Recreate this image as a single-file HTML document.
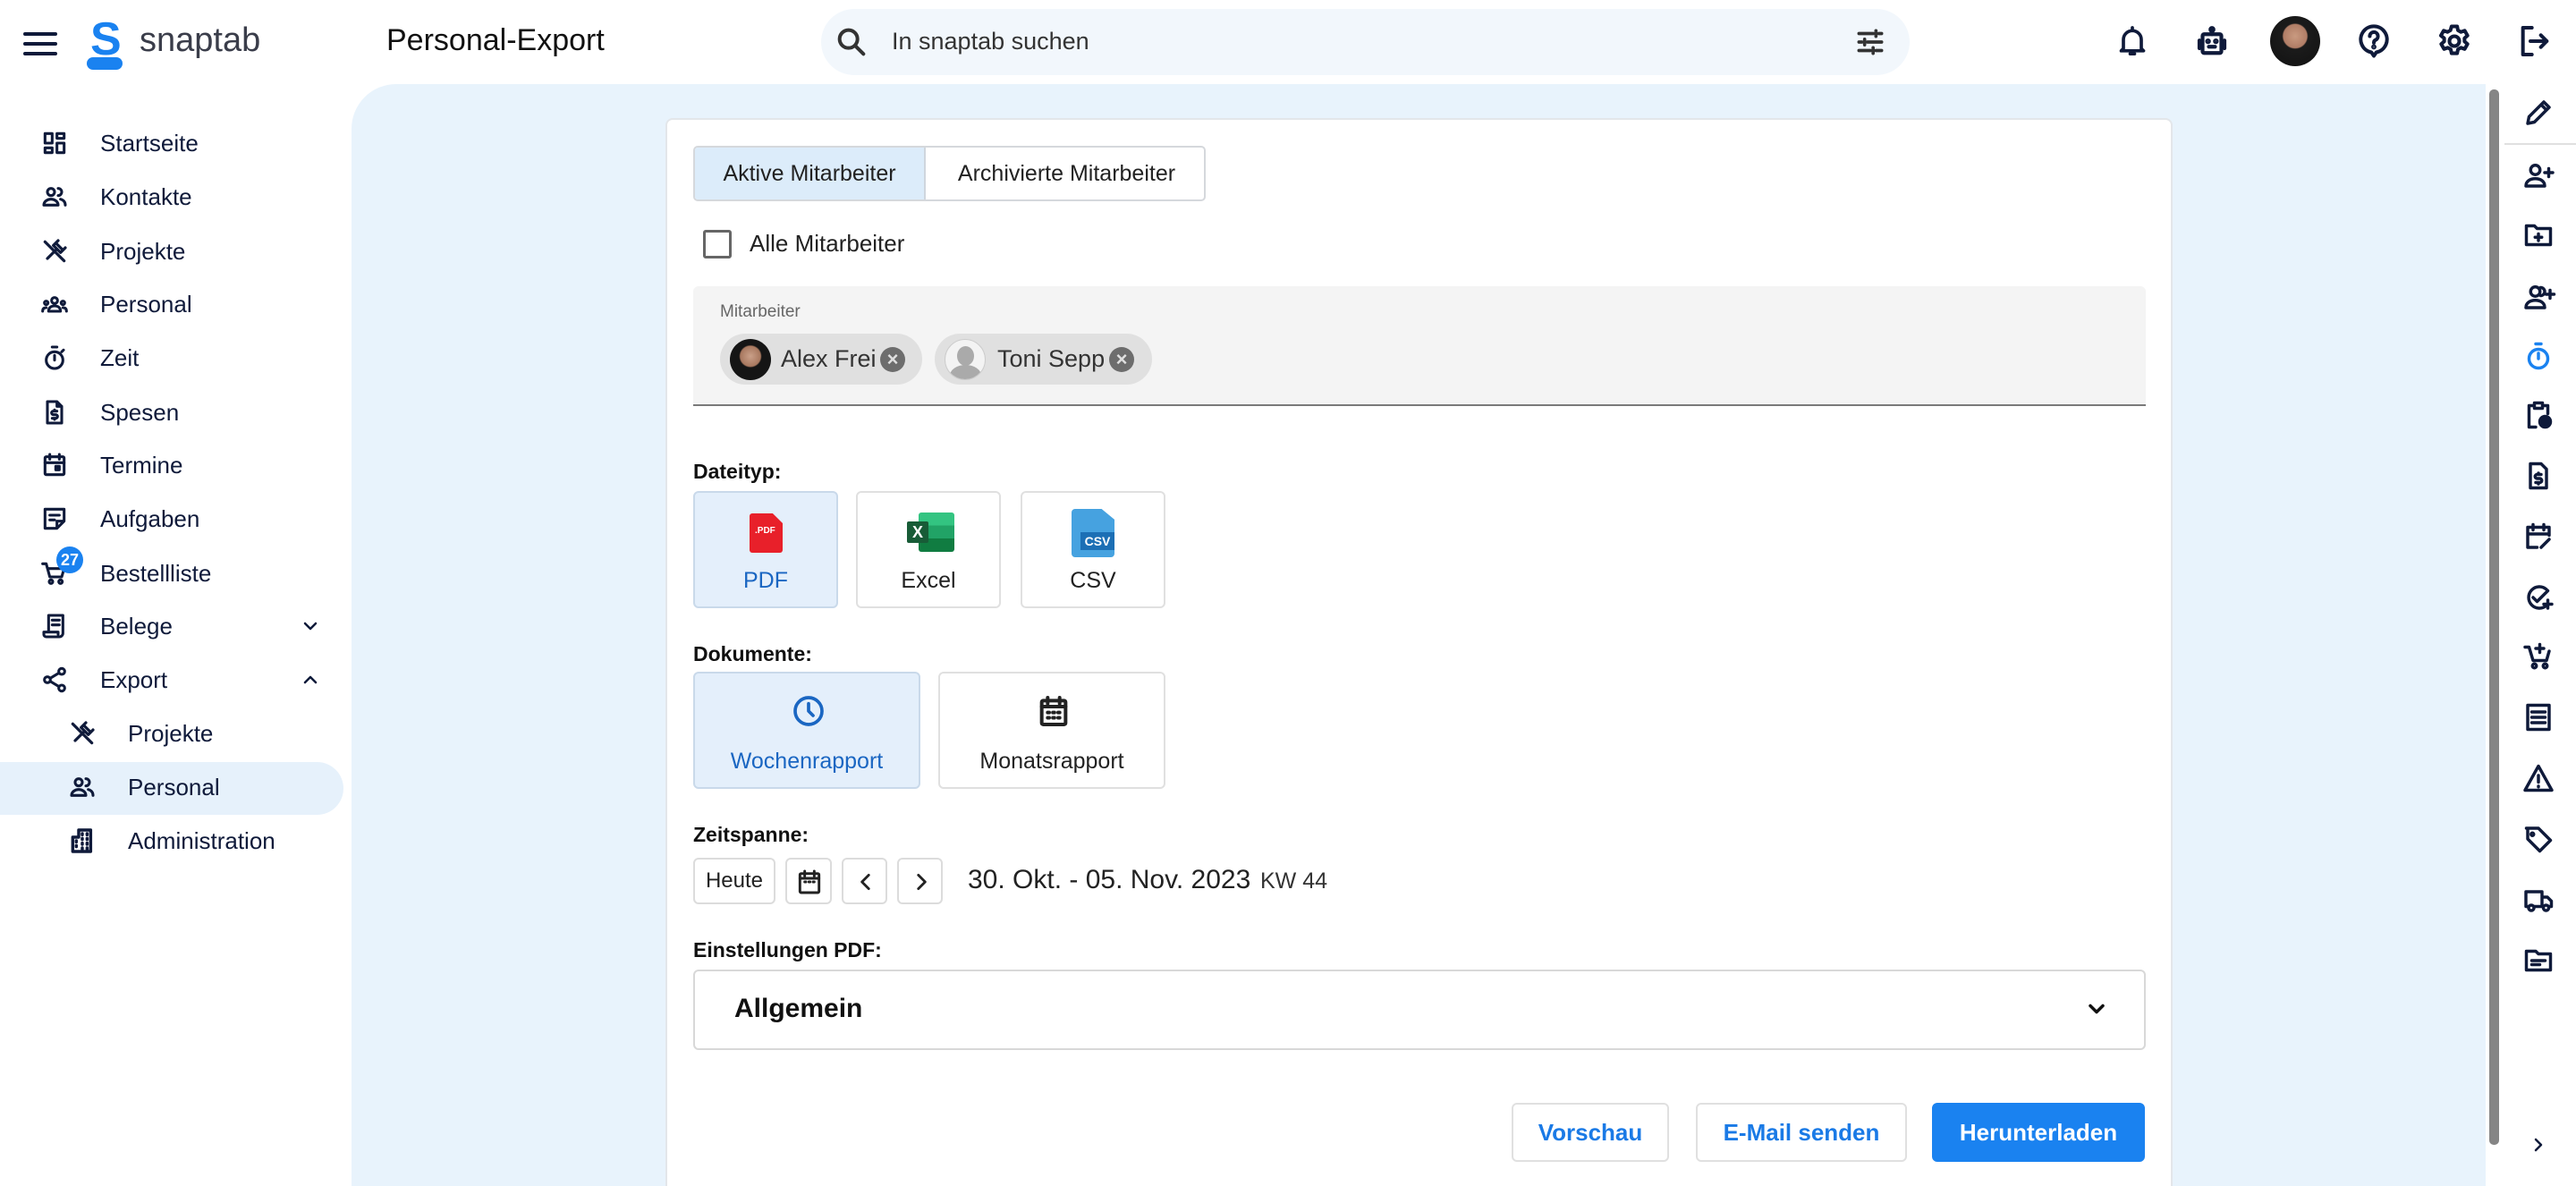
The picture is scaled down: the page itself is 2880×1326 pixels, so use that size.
<!DOCTYPE html>
<html><head><meta charset="utf-8"><style>
*{box-sizing:border-box;margin:0;padding:0}
html,body{width:2880px;height:1326px;overflow:hidden}
body{background:#fff;font-family:"Liberation Sans",sans-serif;color:#1b1b1f;position:relative}
.a{position:absolute}
svg.i{position:absolute;fill:none;stroke:#0f1a3a;stroke-width:2.3;stroke-linecap:round;stroke-linejoin:round}
.nav{position:absolute;left:112px;font-size:26px;color:#0f1a3a;line-height:30px}
.lbl{position:absolute;left:775px;font-size:23px;font-weight:bold;color:#111}
.box{position:absolute;border:2px solid #e0e0e0;border-radius:6px;background:#fff;text-align:center;font-size:25px;color:#222}
.sel{background:#e4effb;border-color:#c9d9ea;color:#1a66c2}
.btn{position:absolute;border:2px solid #dcdcdc;border-radius:6px;background:#fff}
.rb{position:absolute;top:1233px;height:66px;border:2px solid #e0e0e0;border-radius:6px;font-size:26px;font-weight:bold;color:#1a7ae6;text-align:center;line-height:62px;background:#fff}
.ri{position:absolute;left:2820px}
</style></head><body>
<!-- header -->
<svg class="i" style="left:26px;top:34px" width="38" height="30" viewBox="0 0 38 30"><path d="M2 4h34M2 15h34M2 26h34" stroke-width="4"/></svg>
<div class="a" style="left:97px;top:20px;width:40px;height:58px">
 <div class="a" style="left:4px;top:0;font-size:52px;font-weight:bold;color:#1a82f0;line-height:48px">S</div>
 <div class="a" style="left:0;top:44px;width:40px;height:14px;border-radius:7px;background:#1a82f0"></div>
</div>
<div class="a" style="left:156px;top:24px;font-size:38px;color:#3a3d4a">snaptab</div>
<div class="a" style="left:432px;top:26px;font-size:34px;font-weight:500;color:#111">Personal-Export</div>
<div class="a" style="left:918px;top:10px;width:1217px;height:74px;border-radius:37px;background:#f2f7fc"></div>
<svg class="i" style="left:932px;top:27px;stroke:#333;stroke-width:2.4" width="40" height="40" viewBox="0 0 24 24"><circle cx="10" cy="10" r="6"/><path d="M14.5 14.5 20 20"/></svg>
<div class="a" style="left:997px;top:31px;font-size:27px;color:#333">In snaptab suchen</div>
<svg class="i" style="left:2072px;top:28px;stroke:#333" width="38" height="38" viewBox="0 0 24 24"><path d="M4 6h10M18 6h2M16 4v4M4 12h2M10 12h10M8 10v4M4 18h8M16 18h4M14 16v4"/></svg>
<svg class="i" style="left:2364px;top:26px;stroke-width:2.2" width="40" height="40" viewBox="0 0 24 24"><path d="M6 17V11a6 6 0 0 1 12 0v6l1.5 1.5h-15zM10.5 20.5h3M12 3v2"/></svg>
<svg class="i" style="left:2452px;top:26px;stroke-width:2.4" width="42" height="42" viewBox="0 0 24 24"><rect x="6" y="7" width="12" height="12" rx="1"/><path d="M4 11v5M20 11v5M12 7V4"/><circle cx="12" cy="4" r="1"/><circle cx="9.5" cy="11.5" r=".6" fill="#0f1a3a"/><circle cx="14.5" cy="11.5" r=".6" fill="#0f1a3a"/><path d="M10 15h4"/></svg>
<div class="a" style="left:2538px;top:18px;width:56px;height:56px;border-radius:50%;background:radial-gradient(circle at 50% 40%,#c99a80 0,#b07d66 30%,#1b1b1b 33%,#111 100%)"></div>
<svg class="i" style="left:2632px;top:24px;stroke-width:2.2" width="44" height="44" viewBox="0 0 24 24"><path d="M12 21 10.5 18.8A8 8 0 1 1 13.5 18.8z"/><path d="M9.5 9a2.5 2.5 0 1 1 3.5 2.3c-.7.3-1 .9-1 1.7"/><circle cx="12" cy="15.5" r=".5" fill="#0f1a3a"/></svg>
<svg class="i" style="left:2722px;top:24px;stroke-width:2.2" width="44" height="44" viewBox="0 0 24 24"><circle cx="12" cy="12" r="3"/><path d="M10.3 3h3.4l.5 2.4 1.8 1 2.3-.8 1.7 3-1.8 1.6v2l1.8 1.6-1.7 3-2.3-.8-1.8 1-.5 2.4h-3.4l-.5-2.4-1.8-1-2.3.8-1.7-3 1.8-1.6v-2L3.8 8.6l1.7-3 2.3.8 1.8-1z"/></svg>
<svg class="i" style="left:2814px;top:26px;stroke-width:2.4" width="40" height="40" viewBox="0 0 24 24"><path d="M10 3H4v18h6M9 12h11M16 8l4 4-4 4"/></svg>

<!-- content bg -->
<div class="a" style="left:393px;top:94px;width:2386px;height:1232px;background:#e8f3fc;border-top-left-radius:50px"></div>
<div class="a" style="left:2783px;top:100px;width:11px;height:1180px;background:#858585;border-radius:5px"></div>

<!-- sidebar -->
<div class="a" style="left:0;top:852px;width:384px;height:59px;background:#e6f1fb;border-radius:0 30px 30px 0"></div>
<svg class="i" style="left:45px;top:144px" width="32" height="32" viewBox="0 0 24 24"><path d="M4 4h6v8H4zM14 4h6v4h-6zM14 12h6v8h-6zM4 16h6v4H4z"/></svg>
<div class="nav" style="top:145px">Startseite</div>
<svg class="i" style="left:45px;top:204px" width="32" height="32" viewBox="0 0 24 24"><circle cx="9" cy="8" r="3"/><path d="M3 19c0-3 3-5 6-5s6 2 6 5zM15 5a3 3 0 0 1 0 6M17 14c2 .6 4 2 4 5"/></svg>
<div class="nav" style="top:205px">Kontakte</div>
<svg class="i" style="left:45px;top:265px" width="32" height="32" viewBox="0 0 24 24"><path d="M4 4l16 16M6 18l8-8M13 5l6 6M15 3l-4 4 6 6 4-4" stroke-width="2.4"/></svg>
<div class="nav" style="top:266px">Projekte</div>
<svg class="i" style="left:43px;top:324px" width="36" height="32" viewBox="0 0 24 24"><circle cx="12" cy="9" r="2.5"/><circle cx="5" cy="11" r="1.5"/><circle cx="19" cy="11" r="1.5"/><path d="M7 18c0-3 2-4.5 5-4.5s5 1.5 5 4.5zM2 18c0-2 1-3 3-3M22 18c0-2-1-3-3-3"/></svg>
<div class="nav" style="top:325px">Personal</div>
<svg class="i" style="left:45px;top:384px" width="32" height="32" viewBox="0 0 24 24"><circle cx="12" cy="14" r="7"/><path d="M10 3h4M12 10v4M18 7l1.5-1.5"/></svg>
<div class="nav" style="top:385px">Zeit</div>
<svg class="i" style="left:45px;top:445px" width="32" height="32" viewBox="0 0 24 24"><path d="M6 3h8l4 4v14H6zM14 3v4h4M14 11h-3a1.5 1.5 0 0 0 0 3h2a1.5 1.5 0 0 1 0 3h-3M12 10v1M12 17v1"/></svg>
<div class="nav" style="top:446px">Spesen</div>
<svg class="i" style="left:45px;top:504px" width="32" height="32" viewBox="0 0 24 24"><rect x="4" y="5" width="16" height="15" rx="1"/><path d="M4 10h16M8 3v4M16 3v4"/><rect x="13" y="13" width="3" height="3" fill="#0f1a3a"/></svg>
<div class="nav" style="top:505px">Termine</div>
<svg class="i" style="left:45px;top:564px" width="32" height="32" viewBox="0 0 24 24"><path d="M4 4h16v10l-6 6H4zM14 20v-6h6M8 9h8M8 13h4"/></svg>
<div class="nav" style="top:565px">Aufgaben</div>
<svg class="i" style="left:45px;top:625px" width="32" height="32" viewBox="0 0 24 24"><path d="M2 4h3l3 11h10l2-7H7"/><circle cx="9" cy="19" r="1.5"/><circle cx="17" cy="19" r="1.5"/></svg>
<div class="a" style="left:63px;top:611px;width:30px;height:30px;border-radius:50%;background:#1a82f0;color:#fff;font-size:18px;font-weight:bold;text-align:center;line-height:30px">27</div>
<div class="nav" style="top:626px">Bestellliste</div>
<svg class="i" style="left:45px;top:684px" width="32" height="32" viewBox="0 0 24 24"><path d="M7 3h12v15a3 3 0 0 1-3 3H5a2 2 0 0 1-2-2v-2h12v2M7 3v14M10 7h6M10 11h6"/></svg>
<div class="nav" style="top:685px">Belege</div>
<svg class="i" style="left:335px;top:688px" width="24" height="24" viewBox="0 0 24 24"><path d="M6 9l6 6 6-6" stroke-width="2.5"/></svg>
<svg class="i" style="left:45px;top:744px" width="32" height="32" viewBox="0 0 24 24"><circle cx="18" cy="5" r="2.5"/><circle cx="6" cy="12" r="2.5"/><circle cx="18" cy="19" r="2.5"/><path d="M8.2 10.8l7.6-4.6M8.2 13.2l7.6 4.6"/></svg>
<div class="nav" style="top:745px">Export</div>
<svg class="i" style="left:335px;top:748px" width="24" height="24" viewBox="0 0 24 24"><path d="M6 15l6-6 6 6" stroke-width="2.5"/></svg>
<svg class="i" style="left:76px;top:804px" width="32" height="32" viewBox="0 0 24 24"><path d="M4 4l16 16M6 18l8-8M13 5l6 6M15 3l-4 4 6 6 4-4" stroke-width="2.4"/></svg>
<div class="nav" style="left:143px;top:805px">Projekte</div>
<svg class="i" style="left:76px;top:864px" width="32" height="32" viewBox="0 0 24 24"><circle cx="9" cy="8" r="3"/><path d="M3 19c0-3 3-5 6-5s6 2 6 5zM15 5a3 3 0 0 1 0 6M17 14c2 .6 4 2 4 5"/></svg>
<div class="nav" style="left:143px;top:865px">Personal</div>
<svg class="i" style="left:76px;top:924px" width="32" height="32" viewBox="0 0 24 24"><path d="M4 21V9h5V3h10v18zM7 12v1M7 16v1M12 6v1M16 6v1M12 10v1M16 10v1M12 14v1M16 14v1M12 18v1M16 18v1" stroke-width="2.6"/></svg>
<div class="nav" style="left:143px;top:925px">Administration</div>

<!-- right column icons -->
<div class="a" style="left:2800px;top:160px;width:80px;height:2px;background:#e0e0e0"></div>
<svg class="i ri" style="top:108px" width="36" height="36" viewBox="0 0 24 24"><path d="M4 20l1-5L16 4l4 4L9 19zM14 6l4 4"/></svg>
<svg class="i ri" style="top:178px" width="38" height="36" viewBox="0 0 24 24"><circle cx="9" cy="8" r="3.5"/><path d="M2 20c0-3.5 3-5.5 7-5.5s7 2 7 5.5zM19 7v6M16 10h6"/></svg>
<svg class="i ri" style="top:245px" width="36" height="36" viewBox="0 0 24 24"><path d="M3 5h6l2 2h10v12H3zM12 11v5M9.5 13.5h5"/></svg>
<svg class="i ri" style="top:314px" width="38" height="36" viewBox="0 0 24 24"><circle cx="9" cy="8" r="3.5"/><path d="M2 20c0-3.5 3-5.5 7-5.5s7 2 7 5.5zM13 5a3 3 0 0 1 0 6M20 7v6M17 10h6"/></svg>
<svg class="i ri" style="top:380px;stroke:#1a82f0" width="36" height="36" viewBox="0 0 24 24"><circle cx="12" cy="14" r="7"/><path d="M10 3h4M12 10v4"/></svg>
<svg class="i ri" style="top:446px" width="36" height="36" viewBox="0 0 24 24"><path d="M10 21H5V5h3M16 5h3v6M9 3h6v4H9z"/><circle cx="17" cy="17" r="4" fill="#0f1a3a"/></svg>
<svg class="i ri" style="top:514px" width="36" height="36" viewBox="0 0 24 24"><path d="M6 3h8l4 4v14H6zM14 11h-3a1.5 1.5 0 0 0 0 3h2a1.5 1.5 0 0 1 0 3h-3M12 10v1M12 17v1"/></svg>
<svg class="i ri" style="top:582px" width="36" height="36" viewBox="0 0 24 24"><path d="M11 20H4V5h16v6M4 10h16M8 3v4M16 3v4M14 20l6-6"/></svg>
<svg class="i ri" style="top:650px" width="36" height="36" viewBox="0 0 24 24"><path d="M18 6a8 8 0 1 0 0 12M8 12l3 3 8-8M19 14v6M16 17h6"/></svg>
<svg class="i ri" style="top:716px" width="36" height="36" viewBox="0 0 24 24"><path d="M2 5h3l3 10h10l2-7M13 3v6M10 6h6"/><circle cx="9" cy="19" r="1.5"/><circle cx="17" cy="19" r="1.5"/></svg>
<svg class="i ri" style="top:784px" width="36" height="36" viewBox="0 0 24 24"><path d="M4 3h16v18H4zM7 8h10M7 12h10M7 16h10"/></svg>
<svg class="i ri" style="top:852px" width="36" height="36" viewBox="0 0 24 24"><path d="M12 3l10 18H2zM12 10v5M12 18v.5"/></svg>
<svg class="i ri" style="top:920px" width="36" height="36" viewBox="0 0 24 24"><path d="M3 4h9l9 9-8 8-9-9V4"/><circle cx="7.5" cy="8.5" r="1"/></svg>
<svg class="i ri" style="top:988px" width="38" height="36" viewBox="0 0 24 24"><path d="M2 6h12v11H2zM14 10h4l3 3v4h-7"/><circle cx="6" cy="18" r="2" fill="#fff"/><circle cx="17" cy="18" r="2" fill="#fff"/></svg>
<svg class="i ri" style="top:1056px" width="36" height="36" viewBox="0 0 24 24"><path d="M3 5h7l2 2h9v12H3zM7 12h10M7 15h6"/></svg>
<svg class="i" style="left:2826px;top:1268px" width="24" height="24" viewBox="0 0 24 24"><path d="M9 6l6 6-6 6" stroke-width="2.5"/></svg>

<!-- card -->
<div class="a" style="left:744px;top:132px;width:1685px;height:1194px;background:#fff;border:2px solid #e3e6ea;border-bottom:none;border-radius:8px 8px 0 0"></div>
<div class="a" style="left:775px;top:163px;width:573px;height:62px;border:2px solid #d5d8dc;border-radius:5px;overflow:hidden;font-size:25px;line-height:58px">
 <div class="a" style="left:0;top:0;width:258px;height:58px;background:#dcecfa;border-right:2px solid #cfd6dd;text-align:center;color:#222">Aktive Mitarbeiter</div>
 <div class="a" style="left:260px;top:0;width:311px;height:58px;text-align:center;color:#222">Archivierte Mitarbeiter</div>
</div>
<div class="a" style="left:786px;top:257px;width:32px;height:32px;border:3px solid #666;border-radius:3px"></div>
<div class="a" style="left:838px;top:257px;font-size:26px;color:#222">Alle Mitarbeiter</div>
<div class="a" style="left:775px;top:320px;width:1624px;height:134px;background:#f4f4f4;border-bottom:2px solid #7a7a7a;border-radius:6px 6px 0 0"></div>
<div class="a" style="left:805px;top:338px;font-size:19px;color:#666">Mitarbeiter</div>
<div class="a" style="left:805px;top:373px;width:226px;height:57px;border-radius:29px;background:#e0e0e0"></div>
<div class="a" style="left:816px;top:379px;width:46px;height:46px;border-radius:50%;background:radial-gradient(circle at 50% 42%,#caa089 0,#a8785f 32%,#151515 36%)"></div>
<div class="a" style="left:873px;top:386px;font-size:27px;color:#333">Alex Frei</div>
<div class="a" style="left:984px;top:388px;width:28px;height:28px;border-radius:50%;background:#6d6d6d;color:#e0e0e0;font-size:22px;font-weight:bold;text-align:center;line-height:28px">×</div>
<div class="a" style="left:1045px;top:373px;width:243px;height:57px;border-radius:29px;background:#e0e0e0"></div>
<div class="a" style="left:1056px;top:379px;width:46px;height:46px;border-radius:50%;background:#f3f3f3;border:1px solid #ccc;overflow:hidden">
 <div class="a" style="left:13px;top:7px;width:19px;height:22px;border-radius:50%;background:#aaa"></div>
 <div class="a" style="left:5px;top:28px;width:35px;height:24px;border-radius:50% 50% 0 0;background:#aaa"></div>
</div>
<div class="a" style="left:1115px;top:386px;font-size:27px;color:#333">Toni Sepp</div>
<div class="a" style="left:1240px;top:388px;width:28px;height:28px;border-radius:50%;background:#6d6d6d;color:#e0e0e0;font-size:22px;font-weight:bold;text-align:center;line-height:28px">×</div>

<div class="lbl" style="top:514px">Dateityp:</div>
<div class="box sel" style="left:775px;top:549px;width:162px;height:131px">
 <div class="a" style="left:61px;top:23px;width:37px;height:44px;background:#e8202a;clip-path:polygon(0 0,70% 0,100% 25%,100% 100%,0 100%);border-radius:3px"><span style="position:absolute;left:6px;top:14px;color:#fff;font-size:10px;font-weight:bold">.PDF</span></div>
 <div class="a" style="left:0;width:100%;top:84px;color:#1a66c2">PDF</div>
</div>
<div class="box" style="left:957px;top:549px;width:162px;height:131px">
 <div class="a" style="left:68px;top:22px;width:40px;height:44px;background:linear-gradient(#33c481 0 33%,#21a366 33% 66%,#107c41 66%);border-radius:3px"></div>
 <div class="a" style="left:55px;top:32px;width:24px;height:24px;background:#185c37;color:#fff;font-size:18px;font-weight:bold;line-height:24px;border-radius:2px">X</div>
 <div class="a" style="left:0;width:100%;top:84px">Excel</div>
</div>
<div class="box" style="left:1141px;top:549px;width:162px;height:131px">
 <div class="a" style="left:55px;top:18px;width:48px;height:54px;background:#46a2e0;clip-path:polygon(0 0,70% 0,100% 22%,100% 100%,0 100%);border-radius:4px"></div>
 <div class="a" style="left:65px;top:44px;width:38px;height:20px;background:#1c6fb5;color:#fff;font-size:14px;font-weight:bold;line-height:20px">CSV</div>
 <div class="a" style="left:0;width:100%;top:84px">CSV</div>
</div>

<div class="lbl" style="top:718px">Dokumente:</div>
<div class="box sel" style="left:775px;top:751px;width:254px;height:131px">
 <svg class="i" style="left:107px;top:22px;stroke:#1a66c2;stroke-width:2.2" width="40" height="40" viewBox="0 0 24 24"><circle cx="12" cy="12" r="9"/><path d="M12 7v5l3 3"/></svg>
 <div class="a" style="left:0;width:100%;top:84px;color:#1a66c2">Wochenrapport</div>
</div>
<div class="box" style="left:1049px;top:751px;width:254px;height:131px">
 <svg class="i" style="left:107px;top:22px;stroke:#222;stroke-width:2.4" width="40" height="40" viewBox="0 0 24 24"><rect x="4" y="5" width="16" height="16" rx="1"/><path d="M4 9h16M8 3v4M16 3v4M8 13h1M11.5 13h1M15 13h1M8 16.5h1M11.5 16.5h1M15 16.5h1"/></svg>
 <div class="a" style="left:0;width:100%;top:84px">Monatsrapport</div>
</div>

<div class="lbl" style="top:920px">Zeitspanne:</div>
<div class="btn" style="left:775px;top:959px;width:92px;height:52px;font-size:24px;text-align:center;line-height:48px;color:#222">Heute</div>
<div class="btn" style="left:878px;top:959px;width:52px;height:52px"><svg class="i" style="left:9px;top:9px;stroke:#222;stroke-width:2.2" width="32" height="32" viewBox="0 0 24 24"><rect x="4" y="5" width="16" height="16" rx="1"/><path d="M4 9h16M8 3v4M16 3v4M8 12h1M11.5 12h1M15 12h1"/></svg></div>
<div class="btn" style="left:941px;top:959px;width:51px;height:52px"><svg class="i" style="left:12px;top:12px;stroke:#222;stroke-width:2.6" width="26" height="26" viewBox="0 0 24 24"><path d="M15 5l-7 7 7 7"/></svg></div>
<div class="btn" style="left:1003px;top:959px;width:51px;height:52px"><svg class="i" style="left:12px;top:12px;stroke:#222;stroke-width:2.6" width="26" height="26" viewBox="0 0 24 24"><path d="M9 5l7 7-7 7"/></svg></div>
<div class="a" style="left:1082px;top:967px;font-size:30px;color:#222">30. Okt. - 05. Nov. 2023</div>
<div class="a" style="left:1409px;top:971px;font-size:25px;color:#333">KW 44</div>

<div class="lbl" style="top:1049px">Einstellungen PDF:</div>
<div class="a" style="left:775px;top:1084px;width:1624px;height:90px;border:2px solid #d8d8d8;border-radius:6px"></div>
<div class="a" style="left:821px;top:1111px;font-size:30px;font-weight:bold;color:#111">Allgemein</div>
<svg class="i" style="left:2330px;top:1114px;stroke:#111;stroke-width:3" width="28" height="28" viewBox="0 0 24 24"><path d="M6 9l6 6 6-6"/></svg>

<div class="rb" style="left:1690px;width:176px">Vorschau</div>
<div class="rb" style="left:1896px;width:236px">E-Mail senden</div>
<div class="rb" style="left:2160px;width:238px;background:#1a82f0;border-color:#1a82f0;color:#fff">Herunterladen</div>
</body></html>
